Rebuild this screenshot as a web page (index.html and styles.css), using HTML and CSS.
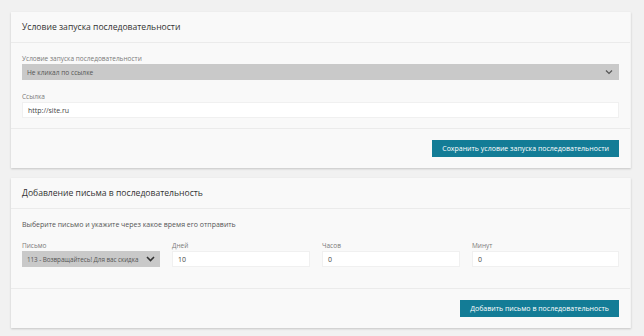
FILE: index.html
```html
<!DOCTYPE html>
<html>
<head>
    <meta charset="UTF-8">
    <title>Последовательность</title>
    <link rel="stylesheet" href="styles.css">
</head>
<body>
    <div class="panel">
        <div class="panel-heading">Условие запуска последовательности</div>
        <div class="panel-body">
            <div class="form-group">
                <label class="form-label">Условие запуска последовательности</label>
                <div class="select-box">
                    <span>Не кликал по ссылке</span>
                    <svg class="chevron" width="8" height="6" viewBox="0 0 8 6"><path d="M1 1.5 L4 4.5 L7 1.5" fill="none" stroke="#555" stroke-width="1.2"/></svg>
                </div>
            </div>
            <div class="form-group last">
                <label class="form-label">Ссылка</label>
                <div class="text-input">http://site.ru</div>
            </div>
        </div>
        <div class="panel-footer">
            <button class="btn-primary">Сохранить условие запуска последовательности</button>
        </div>
    </div>

    <div class="panel">
        <div class="panel-heading">Добавление письма в последовательность</div>
        <div class="panel-body body-letter">
            <p class="hint">Выберите письмо и укажите через какое время его отправить</p>
            <div class="letter-row">
                <div>
                    <label class="form-label">Письмо</label>
                    <div class="select-box compact">
                        <span>113 - Возвращайтесь! Для вас скидка</span>
                        <svg class="chevron" width="9" height="6" viewBox="0 0 9 6"><path d="M1 1 L4.5 4.5 L8 1" fill="none" stroke="#333" stroke-width="1.6"/></svg>
                    </div>
                </div>
                <div>
                    <label class="form-label">Дней</label>
                    <div class="text-input">10</div>
                </div>
                <div>
                    <label class="form-label">Часов</label>
                    <div class="text-input">0</div>
                </div>
                <div>
                    <label class="form-label">Минут</label>
                    <div class="text-input">0</div>
                </div>
            </div>
        </div>
        <div class="panel-footer">
            <button class="btn-primary">Добавить письмо в последовательность</button>
        </div>
    </div>
</body>
</html>
```

FILE: styles.css
```css
body {
    margin: 0;
    padding: 12px 13px 0 11px;
    font-family: "Open Sans", "Noto Sans", sans-serif;
    background: #f1f1f1;
    color: #333;
}

.panel {
    background: #f9f9f9;
    border-right: 1px solid #f4f4f4;
    box-shadow: 0 1px 2px rgba(0,0,0,0.18);
    margin-bottom: 10px;
}

.panel-heading {
    height: 30px;
    line-height: 30px;
    padding: 0 11px;
    font-size: 8.6px;
    color: #333;
    border-bottom: 1px solid #ebebeb;
}

.panel-body {
    padding: 10px 11px 10px;
    border-bottom: 1px solid #ebebeb;
}

.form-group {
    margin-bottom: 11px;
}

.form-group.last {
    margin-bottom: 0;
}

.form-label {
    display: block;
    font-size: 6.5px;
    line-height: 11px;
    color: #7a7a7a;
}

.select-box {
    display: flex;
    align-items: center;
    justify-content: space-between;
    height: 16px;
    padding: 0 6px 0 5px;
    background: #c9c9c9;
    font-size: 6.6px;
    color: #555;
    white-space: nowrap;
}

.select-box.compact {
    padding: 0 5px 0 5px;
    font-size: 6.3px;
    letter-spacing: -0.05px;
}

.text-input {
    height: 16px;
    line-height: 15px;
    padding: 0 5px;
    background: #fff;
    border: 1px solid #f0f0f0;
    box-sizing: border-box;
    font-size: 7px;
    color: #444;
}

.chevron {
    flex-shrink: 0;
}

.panel-footer {
    display: flex;
    justify-content: flex-end;
    padding: 11px 11px 11px;
}

.btn-primary {
    height: 17px;
    padding: 0 10px;
    border: none;
    background: #137c96;
    color: #fff;
    font-family: inherit;
    font-size: 7px;
    cursor: pointer;
}

.body-letter {
    padding-bottom: 21px;
}

.hint {
    margin: 0 0 10px;
    font-size: 7px;
    line-height: 11px;
    color: #555;
}

.letter-row {
    display: grid;
    grid-template-columns: 138px 138px 138px 1fr;
    column-gap: 12px;
}
```
